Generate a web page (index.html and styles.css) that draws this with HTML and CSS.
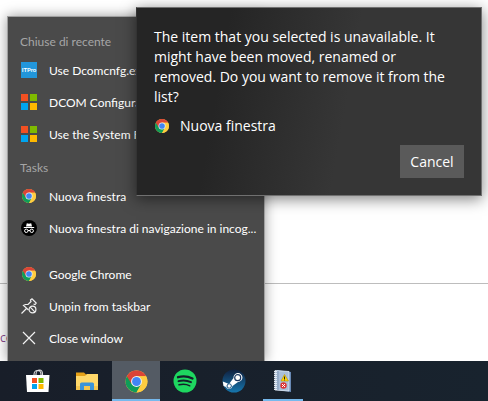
FILE: index.html
```html
<!DOCTYPE html>
<html lang="en">
<head>
    <meta charset="UTF-8">
    <title>Desktop</title>
    <link rel="stylesheet" href="styles.css">
</head>
<body>
<svg class="defs" width="0" height="0">
    <symbol id="chrome" viewBox="0 0 48 48">
        <circle cx="24" cy="24" r="21" fill="#ffcd40"/>
        <path d="M24 24L5.500 14A21 21 0 0 0 24 45L34 29Z" fill="#0f9d58"/>
        <path d="M24 14H42.500A21 21 0 0 0 5.500 14L14.500 29Z" fill="#db4437"/>
        <path d="M24 14H42.500A21 21 0 0 1 24 45L33 29Z" fill="#ffcd40"/>
        <circle cx="24" cy="24" r="10.500" fill="#f1f1f1"/>
        <circle cx="24" cy="24" r="8.500" fill="#4285f4"/>
    </symbol>
    <symbol id="windows" viewBox="0 0 16 16">
        <path d="M0 0h7v7H0z" fill="#f25022"/>
        <path d="M9 0h7v7H9z" fill="#7fba00"/>
        <path d="M0 9h7v7H0z" fill="#00a4ef"/>
        <path d="M9 9h7v7H9z" fill="#ffb900"/>
    </symbol>
</svg>
<main id="page">
    <div class="intro"></div>
    <hr>
    <a class="visited" href="#">ce</a>
</main>

<div id="menu">
    <h4>Chiuse di recente</h4>
    <button class="row"><span class="itpro">ITPro</span><span class="label">Use Dcomcnfg.exe</span></button>
    <button class="row"><svg class="icon"><use href="#windows"/></svg><span class="label">DCOM Configuration</span></button>
    <button class="row"><svg class="icon"><use href="#windows"/></svg><span class="label">Use the System File</span></button>
    <h4>Tasks</h4>
    <button class="row"><svg class="icon"><use href="#chrome"/></svg><span class="label">Nuova finestra</span></button>
    <button class="row">
        <svg class="icon" viewBox="0 0 16 16">
            <circle cx="8" cy="8" r="8" fill="#000"/>
            <path d="M5 6.500L5.800 3.200L8 3.700L10.200 3.200L11 6.500Z" fill="#fff"/>
            <path d="M2.800 7.500H13.200" stroke="#fff" stroke-width="1"/>
            <g fill="none" stroke="#fff"><circle cx="5.300" cy="10.800" r="1.700"/><circle cx="10.700" cy="10.800" r="1.700"/><path d="M7 10.500H9"/></g>
        </svg>
        <span class="label">Nuova finestra di navigazione in incog...</span>
    </button>
    <div class="group">
        <button class="row"><svg class="icon"><use href="#chrome"/></svg><span class="label">Google Chrome</span></button>
        <button class="row">
            <svg class="icon" viewBox="0 0 16 16" fill="none" stroke="#f2f2f2" stroke-width="1.200">
                <path d="M0.500 15.500L5.500 10.500M7.500 12L2.500 7.500L4.500 6.500H7L10 3.500L9.500 2L11 0.800L15.200 5L14 6.500L12.500 6"/>
                <circle cx="11.500" cy="11.500" r="3.400"/>
                <path d="M9.200 9.200L13.800 13.800"/>
            </svg>
            <span class="label">Unpin from taskbar</span>
        </button>
        <button class="row">
            <svg class="icon" viewBox="0 0 16 16" fill="none" stroke="#f2f2f2" stroke-width="1.200">
                <path d="M2 2L14 14M14 2L2 14"/>
            </svg>
            <span class="label">Close window</span>
        </button>
    </div>
</div>

<div id="dialog" role="dialog" aria-labelledby="message">
    <p id="message">The item that you selected is unavailable. It might have been moved, renamed or removed. Do you want to remove it from the list?</p>
    <div class="target"><svg class="icon"><use href="#chrome"/></svg><span>Nuova finestra</span></div>
    <div class="actions"><button>Cancel</button></div>
</div>

<nav id="taskbar">
    <button aria-label="Store">
        <svg width="24" height="24" viewBox="0 0 24 24">
            <path d="M8 8V5.500C8 3 9.500 1.500 11.500 1.500S15 3 15 5.500V8M10 8V5C10 3 11.500 1 13.500 1S16.500 3 16.500 5V8" fill="none" stroke="#ddd" stroke-width="1.100"/>
            <path d="M0 6H23.500L22.500 23H1Z" fill="#fff"/>
            <path d="M6 9h5v5H6z" fill="#f25022"/><path d="M12.500 9h5v5h-5z" fill="#7fba00"/>
            <path d="M6 15h5v5H6z" fill="#00a4ef"/><path d="M12.500 15h5v5h-5z" fill="#ffb900"/>
        </svg>
    </button>
    <button aria-label="File Explorer">
        <svg width="24" height="24" viewBox="0 0 24 24">
            <path d="M1 3.500H9L11 5.500H22V10H1Z" fill="#e6a117"/>
            <path d="M1 7H10L12 5H23V21H1Z" fill="#ffd869"/>
            <path d="M1 17H23V21H1Z" fill="#f5c64f"/>
            <path d="M5 21V15Q5 13.500 6.500 13.500H17.500Q19 13.500 19 15V21H15V17H9V21Z" fill="#3b94d9"/>
        </svg>
    </button>
    <button class="running active" aria-label="Google Chrome">
        <svg width="25" height="25"><use href="#chrome"/></svg>
    </button>
    <button aria-label="Spotify">
        <svg width="24" height="24" viewBox="0 0 24 24">
            <circle cx="12" cy="12" r="11.500" fill="#1ed760"/>
            <g fill="none" stroke="#14202a" stroke-linecap="round">
                <path d="M5 8.200Q12.500 6 19.500 9.500" stroke-width="2.300"/>
                <path d="M5.500 12.200Q12 10.300 18 13.200" stroke-width="1.900"/>
                <path d="M6 15.800Q12 14.300 16.800 16.800" stroke-width="1.500"/>
            </g>
        </svg>
    </button>
    <button aria-label="Steam">
        <svg width="24" height="24" viewBox="0 0 24 24">
            <defs><linearGradient id="steam" x1="0" y1="0" x2="0" y2="1"><stop offset="0" stop-color="#10203f"/><stop offset="1" stop-color="#1676ad"/></linearGradient></defs>
            <circle cx="12" cy="12" r="11.500" fill="url(#steam)"/>
            <path d="M0.800 12.500L7 15L11.500 9A4.500 4.500 0 1 1 16 13L10.500 17A3.400 3.400 0 0 1 4 18L1.500 17Z" fill="#fff"/>
            <circle cx="15.700" cy="8.700" r="3" fill="#fff" stroke="#1b3760" stroke-width="1.200"/>
            <circle cx="7.200" cy="17" r="2.200" fill="none" stroke="#1b5380" stroke-width="1"/>
        </svg>
    </button>
    <button class="running" aria-label="Event Viewer">
        <svg width="24" height="24" viewBox="0 0 24 24">
            <path d="M6 1L20 3V23L6 21Z" fill="#6889b5"/>
            <path d="M4 1.500L18 2.500V22L4 21Z" fill="#aabfd8" stroke="#dde8f4" stroke-width="0.800"/>
            <path d="M7 2V21" stroke="#8298b5"/>
            <path d="M4.500 2V21" stroke="#e4eaf2" stroke-width="3" stroke-dasharray="1 1"/>
            <path d="M13.500 5.500L17.500 12H10Z" fill="#ffd500" stroke="#b89200" stroke-width="0.600"/>
            <path d="M13.500 7.500V10M13.500 10.500V11.400" stroke="#222"/>
            <circle cx="12.500" cy="16.500" r="3.200" fill="#dc3434"/>
            <path d="M11 15L14 18M14 15L11 18" stroke="#fff"/>
        </svg>
    </button>
</nav>
</body>
</html>
```
FILE: styles.css
```css
*{
    margin: 0;
    padding: 0;
    box-sizing: border-box;
}
body{
    position: relative;
    display: flex;
    flex-direction: column;
    min-height: 100vh;
    background: #fff;
    font-family: "Open Sans", "Noto Sans", sans-serif;
    overflow: hidden;
}
button{
    border: 0;
    background: none;
    color: inherit;
    font: inherit;
}
.defs{
    position: absolute;
}
.icon{
    width: 16px;
    height: 16px;
    flex: none;
}
#page{
    flex: 1;
}
#page .intro{
    height: 283px;
}
#page hr{
    border: 0;
    border-top: 1px solid #bdbdbd;
    margin-bottom: 46px;
}
#page .visited{
    display: block;
    color: #8a4a8f;
    font-size: 12px;
    line-height: 16px;
    text-decoration: none;
}
#menu{
    position: absolute;
    left: 7px;
    bottom: 40px;
    width: 258px;
    padding: 7px 0;
    border: 1px solid #a0a0a0;
    border-bottom: 0;
    background: #4a4a4a;
    color: #fff;
    font-family: Lato, "Open Sans", sans-serif;
    font-size: 12px;
    box-shadow: 0 0 12px rgba(0,0,0,0.4);
}
#menu h4{
    height: 30px;
    padding: 6px 12px 0;
    color: #a6a6a6;
    font-weight: normal;
    line-height: 24px;
}
#menu .row{
    display: flex;
    align-items: center;
    gap: 12px;
    width: 100%;
    height: 32px;
    padding: 0 0 0 13px;
    text-align: left;
}
#menu .label{
    white-space: nowrap;
}
#menu .group{
    margin-top: 14px;
}
#menu .itpro{
    width: 16px;
    height: 16px;
    flex: none;
    background: #2196db;
    font-size: 6px;
    font-weight: bold;
    line-height: 16px;
    text-align: center;
}
#dialog{
    position: absolute;
    top: 7px;
    left: 136px;
    right: 6px;
    padding: 19px 17px 17px;
    border: 1px solid #707070;
    border-left-color: #333;
    background: linear-gradient(100deg, #252525 25%, #363636 60%);
    color: #fff;
    font-size: 14px;
    line-height: 20px;
    box-shadow: 0 3px 14px rgba(0,0,0,0.5);
}
#message{
    max-width: 300px;
}
#dialog .target{
    display: flex;
    align-items: center;
    gap: 10px;
    margin-top: 9px;
}
#dialog .actions{
    display: flex;
    justify-content: flex-end;
    margin-top: 9px;
}
#dialog .actions button{
    width: 64px;
    height: 33px;
    background: #5a5a5a;
}
#taskbar{
    position: relative;
    display: flex;
    gap: 1px;
    height: 40px;
    padding-left: 14px;
    background: linear-gradient(90deg, #181e29, #18232e);
}
#taskbar button{
    position: relative;
    display: flex;
    align-items: center;
    justify-content: center;
    width: 48px;
}
#taskbar .active{
    background: #545b64;
}
#taskbar .running::after{
    content: "";
    position: absolute;
    left: 4px;
    right: 4px;
    bottom: 0;
    height: 2px;
    background: #76b9ed;
}
#taskbar .active::after{
    left: 0;
    right: 0;
}
```
